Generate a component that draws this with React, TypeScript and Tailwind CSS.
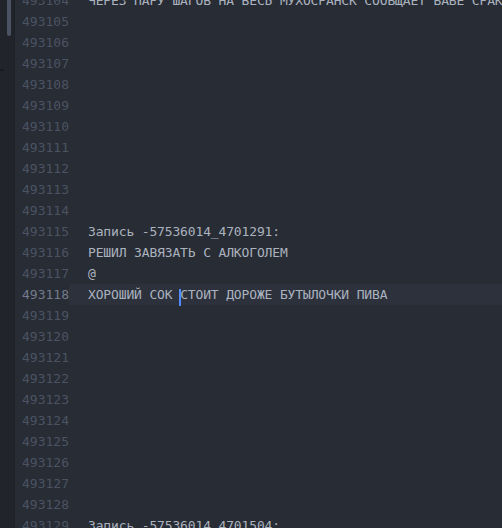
import React from "react";

const lines: string[] = [
  "ЧЕРЕЗ ПАРУ ШАГОВ НА ВЕСЬ МУХОСРАНСК СООБЩАЕТ БАБЕ СРАКЕ",
  "", "", "", "", "", "", "", "", "", "",
  "Запись -57536014_4701291:",
  "РЕШИЛ ЗАВЯЗАТЬ С АЛКОГОЛЕМ",
  "@",
  "ХОРОШИЙ СОК СТОИТ ДОРОЖЕ БУТЫЛОЧКИ ПИВА",
  "", "", "", "", "", "", "", "", "", "",
  "Запись -57536014_4701504:",
];

const CUR = 14;

export default function App() {
  return (
    <div className="w-[502px] h-[528px] overflow-hidden flex bg-[#282c34]" style={{ fontFamily: '"DejaVu Sans Mono", monospace' }}>
      <div className="w-[14px] h-full bg-[#21252b] relative shrink-0">
        <div className="absolute left-[7px] top-0 w-[4px] h-[36px] bg-[#4b5263] rounded-b-sm" />
        <div className="absolute left-0 top-[69px] w-[4px] h-[2px] bg-[#181a1f]" />
      </div>
      <div className="w-[1px] h-full bg-[#1d2026] shrink-0" />
      <div className="flex-1 flex flex-col -mt-[10px] text-[13px]">
        {lines.map((t, i) => (
          <div key={i} className="flex h-[21px] leading-[21px] shrink-0">
            <div className={"w-[54px] text-right shrink-0 " + (i === CUR ? "text-[#737b8c]" : "text-[#4b5363]")}>
              {493104 + i}
            </div>
            <div className={"flex-1 pl-[19px] whitespace-pre text-[#abb2bf] tracking-[-0.15px] " + (i === CUR ? "bg-[#2c313c]" : "")}>
              {i === CUR ? (
                <>
                  <span>ХОРОШИЙ СОК </span>
                  <span className="relative">
                    <span className="absolute left-[-1px] top-[2px] w-[2px] h-[17px] bg-[#528bff]" />
                    СТОИТ ДОРОЖЕ БУТЫЛОЧКИ ПИВА
                  </span>
                </>
              ) : (
                t
              )}
            </div>
          </div>
        ))}
      </div>
    </div>
  );
}
